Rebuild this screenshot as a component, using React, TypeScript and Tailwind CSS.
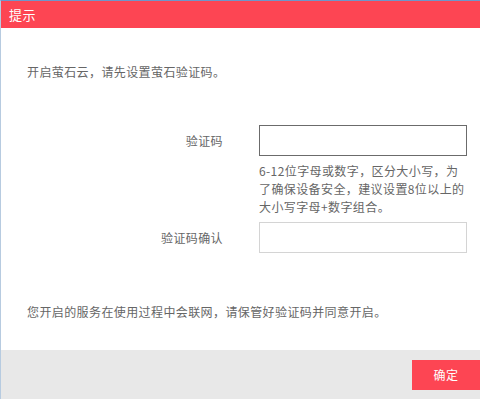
export default function App() {
  const font = { fontFamily: '"Noto Sans CJK SC", "Noto Sans", sans-serif' };
  return (
    <div
      className="flex h-[399px] w-[480px] flex-col border-l border-t border-l-[#b7cbe0] border-t-[#6f96c9] bg-white text-[12px] tracking-[0.4px] text-[#666]"
      style={font}
    >
      <div className="flex h-[27px] shrink-0 items-center bg-[#fd4553] pl-[8px] text-[13px] text-white">提示</div>

      <div className="flex flex-1 flex-col pl-[26px]">
        <p className="mt-[35px] leading-[18px]">开启萤石云，请先设置萤石验证码。</p>

        <div className="mt-[44px] flex items-center">
          <label className="w-[196px] text-right leading-[18px]">验证码</label>
          <div className="ml-[36px] h-[31px] w-[208px] border border-[#6b6b6b] bg-white" />
        </div>
        <p className="ml-[232px] mt-[6px] w-[208px] leading-[18px]">
          6-12位字母或数字，区分大小写，为了确保设备安全，建议设置8位以上的大小写字母+数字组合。
        </p>
        <div className="mt-[6px] flex items-center">
          <label className="w-[196px] text-right leading-[18px]">验证码确认</label>
          <div className="ml-[36px] h-[31px] w-[208px] border border-[#d4d4d4] bg-white" />
        </div>

        <p className="mt-[50px] leading-[18px]">您开启的服务在使用过程中会联网，请保管好验证码并同意开启。</p>
      </div>

      <div className="flex h-[49px] shrink-0 items-center justify-end bg-[#e8e8e8]">
        <button className="h-[30px] w-[68px] bg-[#fd4553] text-[12px] text-white">确定</button>
      </div>
    </div>
  );
}
